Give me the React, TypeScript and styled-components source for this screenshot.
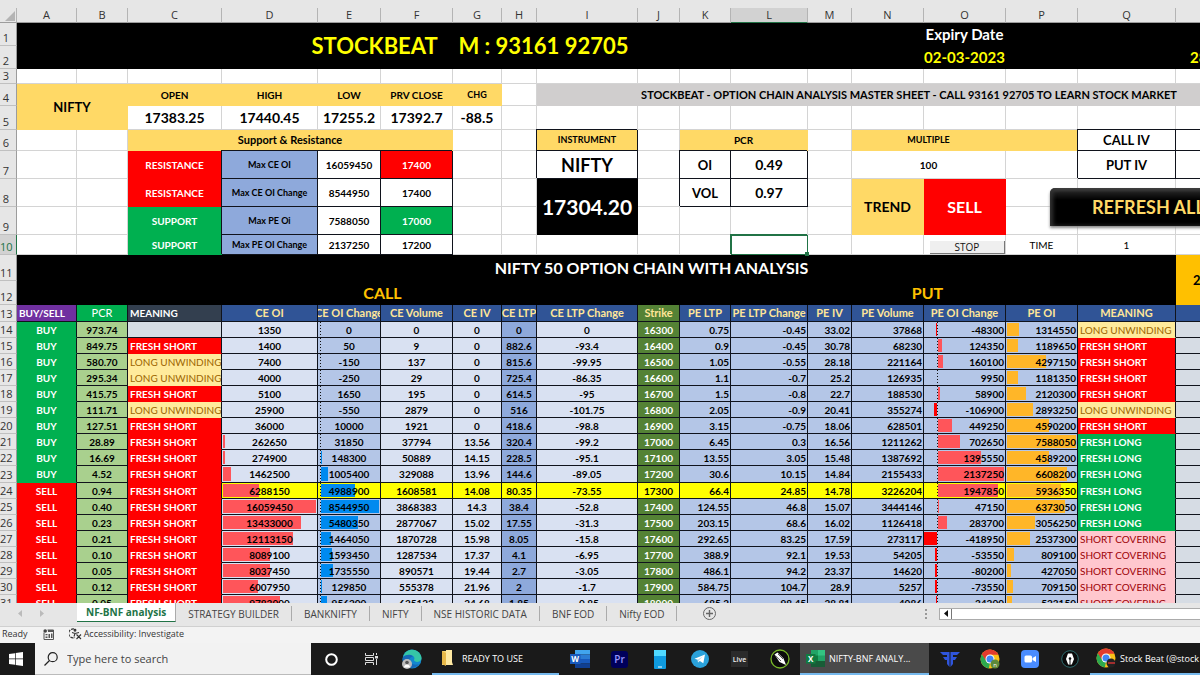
import React from "react";
import styled, { createGlobalStyle, css } from "styled-components";

const GlobalStyle = createGlobalStyle`
  *, *::before, *::after { box-sizing: border-box; }
  body { margin: 0; background: #e6e6e6; }
  button, input { font: inherit; color: inherit; border: 0; padding: 0; background: none; }
`;

const sheetFont = `Lato, "Open Sans", sans-serif`;
const uiFont = `"Open Sans", "Noto Sans", sans-serif`;
const ink = "#10131c";
const gridLine = "#d4d4d4";

/* ---------- page ---------- */

const Page = styled.div`
  display: flex;
  flex-direction: column;
  height: 100vh;
  overflow: hidden;
  font-family: ${uiFont};
  background: #e6e6e6;
`;

const SheetArea = styled.main`
  position: relative;
  flex: 1;
  min-height: 0;
  overflow: hidden;
  padding-top: 8px;
  background: #e6e6e6;
`;

const Sheet = styled.table`
  table-layout: fixed;
  width: 100%;
  min-width: 1282px;
  border-collapse: separate;
  border-spacing: 0;
  background: #fff;
  font-family: ${sheetFont};
  line-height: 14px;
  color: #000;
`;

const Col = styled.col<{ $w?: number }>`
  width: ${(p) => (p.$w ? `${p.$w}px` : "auto")};
`;

const Row = styled.tr<{ $h: number }>`
  height: ${(p) => p.$h}px;
`;

const ColumnHead = styled.th<{ $active?: boolean }>`
  height: 15px;
  padding: 0;
  font: 400 11px/14px ${uiFont};
  color: #333;
  background: ${(p) => (p.$active ? "#d2d2d2" : "#e6e6e6")};
  border-right: 1px solid #b4b4b4;
  border-bottom: 1px solid ${(p) => (p.$active ? "#217346" : "#9c9c9c")};
`;

const Corner = styled(ColumnHead)`
  vertical-align: bottom;
  svg { display: block; margin: 0 1px 1px auto; }
`;

const RowHead = styled.th<{ $active?: boolean }>`
  padding: 0 4px 0 0;
  vertical-align: bottom;
  text-align: center;
  font: 400 11px/14px ${uiFont};
  color: ${(p) => (p.$active ? "#217346" : "#333")};
  background: ${(p) => (p.$active ? "#d2d2d2" : "#e6e6e6")};
  border-right: 1px solid ${(p) => (p.$active ? "#217346" : "#9c9c9c")};
  border-bottom: 1px solid #c0c0c0;
`;

/* ---------- cells ---------- */

const boxed = css`
  border-right: 1px solid ${ink};
  border-bottom: 1px solid ${ink};
  box-shadow: -1px -1px 0 0 ${ink};
`;

const Cell = styled.td<{ $size?: number }>`
  padding: 0;
  text-align: center;
  white-space: nowrap;
  overflow: hidden;
  font-size: ${(p) => p.$size ?? 10}px;
  line-height: ${(p) => ((p.$size ?? 10) > 11 ? 20 : 14)}px;
  border-right: 1px solid ${gridLine};
  border-bottom: 1px solid ${gridLine};
`;

const BlackCell = styled(Cell)<{ $fg?: string }>`
  background: #000;
  color: ${(p) => p.$fg ?? "#fff"};
  font-weight: 700;
  border-color: #000;
`;

const ClippedDate = styled(BlackCell)`
  text-align: left;
  padding-left: 14px;
`;

const AmberCell = styled(Cell)<{ $boxed?: boolean }>`
  background: #ffd966;
  font-weight: 700;
  border-color: #ffd966;
  ${(p) => p.$boxed && boxed}
`;

const GoldCell = styled(Cell)`
  background: #ffc000;
  border-color: #ffc000;
  font-weight: 700;
  text-align: left;
  padding-left: 17px;
`;

const BannerCell = styled(Cell)`
  background: #d0cece;
  border-color: #d0cece;
  font-weight: 700;
`;

const ValueCell = styled(Cell)`
  font-weight: 700;
`;

const BoxCell = styled(Cell)<{ $bg?: string; $fg?: string }>`
  ${boxed}
  font-weight: 700;
  background: ${(p) => p.$bg ?? "#fff"};
  color: ${(p) => p.$fg ?? "#000"};
`;

const LevelCell = styled(Cell)<{ $support?: boolean }>`
  background: ${(p) => (p.$support ? "#00b050" : "#f00")};
  border-color: ${(p) => (p.$support ? "#00b050" : "#f00")};
  color: #fff;
  font-weight: 700;
`;

const SelectedCell = styled(Cell)`
  position: relative;
  overflow: visible;
  border: 0;
  box-shadow: inset 0 0 0 1px #217346, -1px -1px 0 0 #217346;
  &::after {
    content: "";
    position: absolute;
    right: -1px;
    bottom: -1px;
    width: 4px;
    height: 4px;
    background: #217346;
  }
`;

const StopSlot = styled(Cell)`
  padding: 6px 0 0 6px;
  vertical-align: top;
`;

const StopButton = styled.button`
  display: block;
  width: 100%;
  height: 13px;
  overflow: hidden;
  background: #efefef;
  border-right: 1px solid #777;
  border-bottom: 1px solid #777;
  font: 400 10px/13px ${uiFont};
  color: #111;
`;

const RefreshButton = styled.button`
  position: absolute;
  left: 1050px;
  top: 188px;
  width: 190px;
  height: 38px;
  padding-left: 42px;
  text-align: left;
  white-space: nowrap;
  border-radius: 5px 5px 0 0;
  background: linear-gradient(#4a4a4a 0, #1c1c1c 5px, #000 12px);
  box-shadow: 0 2px 3px #888, inset 3px 0 4px #333;
  font: 700 18px/38px ${sheetFont};
  color: #ffd966;
`;

/* ---------- option chain ---------- */

const ChainHead = styled.th<{ $bg?: string; $fg?: string; $left?: boolean; $thin?: boolean }>`
  padding: 0 0 0 ${(p) => (p.$left ? 2 : 0)}px;
  overflow: hidden;
  white-space: nowrap;
  text-align: ${(p) => (p.$left ? "left" : "center")};
  font-size: ${(p) => (p.$left ? 10 : 11)}px;
  line-height: 14px;
  font-weight: ${(p) => (p.$thin ? 400 : 700)};
  background: ${(p) => p.$bg ?? "#305496"};
  color: ${(p) => p.$fg ?? "#ffe699"};
  border-right: 1px solid ${ink};
  border-bottom: 1px solid ${ink};
`;

/* Wider than its cell, so that a long heading is clipped evenly at both sides. */
const HeadText = styled.span`
  display: block;
  margin: 0 -4px;
`;

const SignalCell = styled(Cell)<{ $sell: boolean }>`
  background: ${(p) => (p.$sell ? "#f00" : "#00b050")};
  color: #fff;
  font-weight: 700;
  border-color: ${(p) => (p.$sell ? "#f00" : "#00b050")};
  border-right-color: ${ink};
`;

type Tone = "ratio" | "light" | "mid" | "strong" | "strike" | "side";
const toneColor: Record<Tone, string> = {
  ratio: "#a9d08e",
  light: "#d9e1f2",
  mid: "#b4c6e7",
  strong: "#8ea9db",
  strike: "#548235",
  side: "#d6dce4",
};

const ChainCell = styled(Cell)<{ $tone: Tone; $atm?: boolean; $right?: boolean }>`
  background-color: ${(p) => (p.$atm ? "#ff0" : toneColor[p.$tone])};
  color: ${(p) => (p.$tone === "strike" && !p.$atm ? "#fff" : "#000")};
  font-weight: 700;
  text-align: ${(p) => (p.$right ? "right" : "center")};
  padding-right: ${(p) => (p.$right ? 1 : 0)}px;
  border-color: ${ink};
`;

/* A solid data bar; --from and --len are computed from the cell's value. */
const BarCell = styled(ChainCell)<{ $bar: string }>`
  background-image: linear-gradient(${(p) => p.$bar}, ${(p) => p.$bar});
  background-repeat: no-repeat;
  background-position: var(--from) 1px;
  background-size: var(--len) calc(100% - 2px);
`;

/* A data bar that grows from a dashed zero axis. */
const AxisBarCell = styled(ChainCell)<{ $bar: string; $axis: number }>`
  background-image: linear-gradient(#111 50%, transparent 50%),
    linear-gradient(${(p) => p.$bar}, ${(p) => p.$bar});
  background-repeat: repeat-y, no-repeat;
  background-position: ${(p) => p.$axis}px 0, var(--from) 1px;
  background-size: 1px 3px, var(--len) calc(100% - 2px);
`;

type Mood = "FRESH SHORT" | "LONG UNWINDING" | "FRESH LONG" | "SHORT COVERING" | "";
const moodStyle: Record<Mood, ReturnType<typeof css>> = {
  "FRESH SHORT": css`background: #f00; border-color: #f00; color: #fff; font-weight: 700;`,
  "LONG UNWINDING": css`background: #ffeb9c; border-color: #ffeb9c; color: #9c6500;`,
  "FRESH LONG": css`background: #00b050; border-color: #00b050; color: #fff; font-weight: 700;`,
  "SHORT COVERING": css`background: #ffc7ce; border-color: #ffc7ce; color: #9c0006;`,
  "": css`background: #d6dce4; border-color: ${ink};`,
};

const MoodCell = styled(Cell)<{ $mood: Mood }>`
  text-align: left;
  padding-left: 2px;
  ${(p) => moodStyle[p.$mood]}
  border-right-color: ${ink};
`;

/* ---------- data ---------- */

const letters = "ABCDEFGHIJKLMNOPQR".split("");
const widths = [60, 51, 94, 96, 63, 72, 49, 35, 101, 42, 51, 77, 44, 72, 82, 72, 98];

type ChainRow = [string, Mood, number, number, string, string, string, string, string, string, string, string, string, number, number, Mood];
const FS: Mood = "FRESH SHORT";
const LU: Mood = "LONG UNWINDING";
const FL: Mood = "FRESH LONG";
const SC: Mood = "SHORT COVERING";

const chain: ChainRow[] = [
  ["973.74", "", 1350, 0, "0", "0", "0", "0", "16300", "0.75", "-0.45", "33.02", "37868", -48300, 1314550, LU],
  ["849.75", FS, 1400, 50, "9", "0", "882.6", "-93.4", "16400", "0.9", "-0.45", "30.78", "68230", 124350, 1189650, FS],
  ["580.70", LU, 7400, -150, "137", "0", "815.6", "-99.95", "16500", "1.05", "-0.55", "28.18", "221164", 160100, 4297150, FS],
  ["295.34", LU, 4000, -250, "29", "0", "725.4", "-86.35", "16600", "1.1", "-0.7", "25.2", "126935", 9950, 1181350, FS],
  ["415.75", FS, 5100, 1650, "195", "0", "614.5", "-95", "16700", "1.5", "-0.8", "22.7", "188530", 58900, 2120300, FS],
  ["111.71", LU, 25900, -550, "2879", "0", "516", "-101.75", "16800", "2.05", "-0.9", "20.41", "355274", -106900, 2893250, LU],
  ["127.51", FS, 36000, 10000, "1921", "0", "418.6", "-98.8", "16900", "3.15", "-0.75", "18.06", "628501", 449250, 4590200, FS],
  ["28.89", FS, 262650, 31850, "37794", "13.56", "320.4", "-99.2", "17000", "6.45", "0.3", "16.56", "1211262", 702650, 7588050, FL],
  ["16.69", FS, 274900, 148300, "50889", "14.15", "228.5", "-95.1", "17100", "13.55", "3.05", "15.48", "1387692", 1395550, 4589200, FL],
  ["4.52", FS, 1462500, 1005400, "329088", "13.96", "144.6", "-89.05", "17200", "30.6", "10.15", "14.84", "2155433", 2137250, 6608200, FL],
  ["0.94", FS, 6288150, 4988900, "1608581", "14.08", "80.35", "-73.55", "17300", "66.4", "24.85", "14.78", "3226204", 1947850, 5936350, FL],
  ["0.40", FS, 16059450, 8544950, "3868383", "14.3", "38.4", "-52.8", "17400", "124.55", "46.8", "15.07", "3444146", 47150, 6373050, FL],
  ["0.23", FS, 13433000, 5480350, "2877067", "15.02", "17.55", "-31.3", "17500", "203.15", "68.6", "16.02", "1126418", 283700, 3056250, FL],
  ["0.21", FS, 12113150, 1464050, "1870728", "15.98", "8.05", "-15.8", "17600", "292.65", "83.25", "17.59", "273117", -418950, 2537300, SC],
  ["0.10", FS, 8089100, 1593450, "1287534", "17.37", "4.1", "-6.95", "17700", "388.9", "92.1", "19.53", "54205", -53550, 809100, SC],
  ["0.05", FS, 8037450, 1735550, "890571", "19.44", "2.7", "-3.05", "17800", "486.1", "94.2", "23.37", "14620", -80200, 427050, SC],
  ["0.12", FS, 6007950, 129850, "555378", "21.96", "2", "-1.7", "17900", "584.75", "104.7", "28.9", "5257", -73550, 709150, SC],
  ["0.05", FS, 9783000, 956200, "625123", "24.68", "1.85", "-0.85", "18000", "685.2", "98.45", "28.81", "4086", -34200, 523150, SC],
];

const barVars = (value: number, max: number, full: number, start: number) => {
  const len = Math.round((Math.abs(value) / max) * full);
  const from = value < 0 ? start - 1 - len : start;
  return { "--from": `${from}px`, "--len": `${len}px` } as React.CSSProperties;
};

const Blanks = ({ n }: { n: number }) => (
  <>
    {Array.from({ length: n }, (_, i) => (
      <Cell key={i} />
    ))}
  </>
);

const Num = ({ n, active }: { n: number; active?: boolean }) => (
  <RowHead scope="row" $active={active}>
    {n}
  </RowHead>
);

const chainHeads = ["CE OI", "CE OI Change", "CE Volume", "CE IV", "CE LTP", "CE LTP Change"];
const putHeads = ["PE LTP", "PE LTP Change", "PE IV", "PE Volume", "PE OI Change", "PE OI", "MEANING", ""];

const ChainRows = () => (
  <>
    {chain.map((r, i) => {
      const atm = r[8] === "17300";
      return (
        <Row key={r[8]} $h={i === 9 ? 17 : 16}>
          <Num n={14 + i} />
          <SignalCell $sell={i > 9}>{i > 9 ? "SELL" : "BUY"}</SignalCell>
          <ChainCell $tone="ratio">{r[0]}</ChainCell>
          <MoodCell $mood={r[1]}>{r[1]}</MoodCell>
          <BarCell $tone="light" $atm={atm} $bar="#ff555a" style={barVars(r[2], 16059450, 93, 1)}>{r[2]}</BarCell>
          <AxisBarCell $tone="mid" $atm={atm} $bar="#008aef" $axis={2} style={barVars(r[3], 8544950, 58, 3)}>{r[3]}</AxisBarCell>
          <ChainCell $tone="light" $atm={atm}>{r[4]}</ChainCell>
          <ChainCell $tone="light" $atm={atm}>{r[5]}</ChainCell>
          <ChainCell $tone="strong" $atm={atm}>{r[6]}</ChainCell>
          <ChainCell $tone="light" $atm={atm}>{r[7]}</ChainCell>
          <ChainCell $tone="strike" $atm={atm}>{r[8]}</ChainCell>
          <ChainCell $tone="mid" $atm={atm} $right>{r[9]}</ChainCell>
          <ChainCell $tone="mid" $atm={atm} $right>{r[10]}</ChainCell>
          <ChainCell $tone="mid" $atm={atm} $right>{r[11]}</ChainCell>
          <ChainCell $tone="mid" $atm={atm} $right>{r[12]}</ChainCell>
          <AxisBarCell $tone="mid" $atm={atm} $right $bar={r[13] < 0 ? "#f00" : "#ff555a"} $axis={13} style={barVars(r[13], 2137250, 66, 14)}>{r[13]}</AxisBarCell>
          <BarCell $tone="mid" $atm={atm} $right $bar="#ffb628" style={barVars(r[14], 7588050, 69, 1)}>{r[14]}</BarCell>
          <MoodCell $mood={r[15]}>{r[15]}</MoodCell>
          <ChainCell $tone="side" />
        </Row>
      );
    })}
  </>
);

/* ---------- bottom bars ---------- */

const TabBar = styled.nav`
  display: flex;
  align-items: center;
  height: 23px;
  flex: none;
  padding-bottom: 2px;
  background: #e6e6e6;
  font-size: 10px;
  color: #444;
`;

const TabArrows = styled.div`
  display: flex;
  justify-content: space-between;
  width: 77px;
  padding: 0 33px 0 18px;
  svg { display: block; }
`;

const Tab = styled.button<{ $active?: boolean }>`
  flex: none;
  height: 15px;
  padding: 0 12px;
  line-height: 14px;
  border-right: 1px solid #ababab;
  ${(p) =>
    p.$active &&
    css`
      align-self: flex-start;
      height: 19px;
      padding: 0 9px;
      line-height: 18px;
      font-weight: 700;
      color: #217346;
      background: #fff;
      border-bottom: 1px solid #217346;
    `}
`;

const AddSheet = styled.button`
  display: flex;
  margin-left: 26px;
`;

const ScrollGroup = styled.div`
  display: flex;
  align-items: center;
  gap: 12px;
  width: 275px;
  margin-left: auto;
`;

const ScrollTrack = styled.div`
  display: flex;
  flex: 1;
  height: 12px;
  border: 1px solid #ababab;
  border-right: 0;
  background: #fff;
`;

const ScrollArrow = styled.button`
  display: flex;
  align-items: center;
  justify-content: center;
  width: 12px;
  border-right: 1px solid #777;
`;

const StatusBar = styled.footer`
  display: flex;
  align-items: center;
  flex: none;
  gap: 15px;
  height: 17px;
  padding: 0 0 2px 2px;
  border-top: 1px solid #d0d0d0;
  background: #f3f3f3;
  font-size: 9px;
  line-height: 14px;
  color: #333;
  svg { display: block; }
`;

const StatusItem = styled.span`
  display: flex;
  align-items: center;
  gap: 2px;
`;

const TaskBar = styled.div`
  display: flex;
  flex: none;
  gap: 1px;
  height: 32px;
  overflow: hidden;
  background: #1a1a1a;
  font-size: 9px;
  color: #fff;
`;

const StartGroup = styled.div`
  display: flex;
  flex: none;
  width: 311px;
`;

const StartButton = styled.button`
  display: flex;
  align-items: center;
  justify-content: center;
  width: 35px;
  padding-right: 4px;
`;

const SearchBox = styled.label`
  display: flex;
  flex: 1;
  align-items: center;
  gap: 9px;
  padding-left: 9px;
  background: #f2f2f2;
  border-bottom: 1px solid #bbb;
`;

const SearchInput = styled.input`
  flex: 1;
  min-width: 0;
  outline: 0;
  font-size: 11px;
  line-height: 16px;
  color: #333;
  &::placeholder { color: #444; opacity: 1; }
`;

const TaskIcon = styled.button`
  display: flex;
  flex: none;
  align-items: center;
  justify-content: center;
  width: 39px;
`;

const TaskWindow = styled.button<{ $w: number; $active?: boolean }>`
  display: flex;
  flex: none;
  align-items: center;
  gap: 4px;
  width: ${(p) => p.$w}px;
  padding-left: 6px;
  white-space: nowrap;
  background: ${(p) => (p.$active ? "#4a4a4a" : "transparent")};
  border-bottom: 2px solid #76b9ed;
`;

const Chrome = () => (
  <>
    <circle cx="10" cy="10" r="9.5" fill="#fbc116" />
    <path d="M10 10 5.5 12.5 1.8 5.3A9.500 9.500 0 0 1 18.500 5.800H10Z" fill="#e33b2e" />
    <path d="M1.800 5.300 6.300 12.200 10 14 8.800 19.400A9.500 9.500 0 0 1 1.800 5.300Z" fill="#2da94f" />
    <circle cx="10" cy="10" r="4.500" fill="#fff" />
    <circle cx="10" cy="10" r="3.500" fill="#4285f4" />
  </>
);

const App = () => (
  <Page>
    <GlobalStyle />
    <SheetArea>
      <Sheet>
        <colgroup>
          <Col $w={17} />
          {widths.map((w, i) => (
            <Col key={i} $w={w} />
          ))}
          <Col />
        </colgroup>
        <thead>
          <tr>
            <Corner aria-label="Select all">
              <svg width="10" height="10"><path d="M10 0V10H0Z" fill="#b4b4b4" /></svg>
            </Corner>
            {letters.map((l) => (
              <ColumnHead key={l} scope="col" $active={l === "L"}>{l}</ColumnHead>
            ))}
          </tr>
        </thead>
        <tbody>
          <Row $h={23}>
            <Num n={1} />
            <BlackCell colSpan={14} rowSpan={2} $size={22} $fg="#ff0">STOCKBEAT &nbsp; &nbsp;M : 93161 92705</BlackCell>
            <BlackCell $size={15}>Expiry Date</BlackCell>
            <BlackCell colSpan={3} />
          </Row>
          <Row $h={23}>
            <Num n={2} />
            <BlackCell $size={15} $fg="#ff0">02-03-2023</BlackCell>
            <BlackCell colSpan={2} />
            <ClippedDate $size={15} $fg="#ff0">28</ClippedDate>
          </Row>
          <Row $h={15}>
            <Num n={3} />
            <Blanks n={18} />
          </Row>
          <Row $h={22}>
            <Num n={4} />
            <AmberCell colSpan={2} rowSpan={2} $size={13}>NIFTY</AmberCell>
            <AmberCell>OPEN</AmberCell>
            <AmberCell>HIGH</AmberCell>
            <AmberCell>LOW</AmberCell>
            <AmberCell>PRV CLOSE</AmberCell>
            <AmberCell $size={9}>CHG</AmberCell>
            <Blanks n={1} />
            <BannerCell colSpan={10} $size={11}>STOCKBEAT - OPTION CHAIN ANALYSIS MASTER SHEET - CALL 93161 92705 TO LEARN STOCK MARKET</BannerCell>
          </Row>
          <Row $h={24}>
            <Num n={5} />
            <ValueCell $size={14}>17383.25</ValueCell>
            <ValueCell $size={14}>17440.45</ValueCell>
            <ValueCell $size={14}>17255.2</ValueCell>
            <ValueCell $size={14}>17392.7</ValueCell>
            <ValueCell $size={14}>-88.5</ValueCell>
            <Blanks n={11} />
          </Row>
          <Row $h={21}>
            <Num n={6} />
            <Blanks n={2} />
            <AmberCell colSpan={4} $size={11}>Support &amp; Resistance</AmberCell>
            <Blanks n={2} />
            <AmberCell $boxed $size={9}>INSTRUMENT</AmberCell>
            <Blanks n={1} />
            <AmberCell colSpan={2}>PCR</AmberCell>
            <Blanks n={1} />
            <AmberCell colSpan={2} $size={9}>MULTIPLE</AmberCell>
            <AmberCell />
            <BoxCell $size={13}>CALL IV</BoxCell>
            <BoxCell />
          </Row>
          <Row $h={28}>
            <Num n={7} />
            <Blanks n={2} />
            <LevelCell>RESISTANCE</LevelCell>
            <BoxCell $bg="#8ea9db" $size={9}>Max CE OI</BoxCell>
            <BoxCell>16059450</BoxCell>
            <BoxCell $bg="#f00" $fg="#fff">17400</BoxCell>
            <Blanks n={2} />
            <BoxCell $size={18}>NIFTY</BoxCell>
            <Blanks n={1} />
            <BoxCell $size={13}>OI</BoxCell>
            <BoxCell $size={14}>0.49</BoxCell>
            <Blanks n={1} />
            <ValueCell colSpan={2}>100</ValueCell>
            <Blanks n={1} />
            <BoxCell $size={13}>PUT IV</BoxCell>
            <BoxCell />
          </Row>
          <Row $h={28}>
            <Num n={8} />
            <Blanks n={2} />
            <LevelCell>RESISTANCE</LevelCell>
            <BoxCell $bg="#8ea9db" $size={9}>Max CE OI Change</BoxCell>
            <BoxCell>8544950</BoxCell>
            <BoxCell>17400</BoxCell>
            <Blanks n={2} />
            <BlackCell rowSpan={2} $size={21}>17304.20</BlackCell>
            <Blanks n={1} />
            <BoxCell $size={13}>VOL</BoxCell>
            <BoxCell $size={14}>0.97</BoxCell>
            <Blanks n={1} />
            <AmberCell rowSpan={2} $size={14}>TREND</AmberCell>
            <LevelCell rowSpan={2} $size={16}>SELL</LevelCell>
            <Blanks n={3} />
          </Row>
          <Row $h={28}>
            <Num n={9} />
            <Blanks n={2} />
            <LevelCell $support>SUPPORT</LevelCell>
            <BoxCell $bg="#8ea9db" $size={9}>Max PE Oi</BoxCell>
            <BoxCell>7588050</BoxCell>
            <BoxCell $bg="#00b050" $fg="#fff">17000</BoxCell>
            <Blanks n={2} />
            <Blanks n={4} />
            <Blanks n={3} />
          </Row>
          <Row $h={20}>
            <Num n={10} active />
            <Blanks n={2} />
            <LevelCell $support>SUPPORT</LevelCell>
            <BoxCell $bg="#8ea9db" $size={9}>Max PE OI Change</BoxCell>
            <BoxCell>2137250</BoxCell>
            <BoxCell>17200</BoxCell>
            <Blanks n={5} />
            <SelectedCell />
            <Blanks n={2} />
            <StopSlot><StopButton>STOP</StopButton></StopSlot>
            <Cell>TIME</Cell>
            <Cell>1</Cell>
            <Blanks n={1} />
          </Row>
          <Row $h={26}>
            <Num n={11} />
            <BlackCell colSpan={2} />
            <BlackCell colSpan={15} $size={16}>NIFTY 50 OPTION CHAIN WITH ANALYSIS</BlackCell>
            <GoldCell rowSpan={2} $size={13}>2</GoldCell>
          </Row>
          <Row $h={24}>
            <Num n={12} />
            <BlackCell colSpan={2} />
            <BlackCell colSpan={7} $size={16} $fg="#ffc000">CALL</BlackCell>
            <BlackCell />
            <BlackCell colSpan={7} $size={16} $fg="#ffc000">PUT</BlackCell>
          </Row>
          <Row $h={17}>
            <Num n={13} />
            <ChainHead scope="col" $bg="#7030a0" $fg="#fff" $left>BUY/SELL</ChainHead>
            <ChainHead scope="col" $bg="#00b050" $fg="#fff" $thin>PCR</ChainHead>
            <ChainHead scope="col" $bg="#333f4f" $fg="#fff" $left>MEANING</ChainHead>
            {chainHeads.map((h) => <ChainHead key={h} scope="col"><HeadText>{h}</HeadText></ChainHead>)}
            <ChainHead scope="col" $bg="#548235">Strike</ChainHead>
            {putHeads.map((h) => <ChainHead key={h} scope="col"><HeadText>{h}</HeadText></ChainHead>)}
          </Row>
          <ChainRows />
        </tbody>
      </Sheet>
      <RefreshButton>REFRESH ALL</RefreshButton>
    </SheetArea>

    <TabBar aria-label="Sheets">
      <TabArrows>
        <svg width="4" height="7"><path d="M4 0V7L0 3.500Z" fill="#bbb" /></svg>
        <svg width="4" height="7"><path d="M0 0V7L4 3.500Z" fill="#bbb" /></svg>
      </TabArrows>
      <Tab $active>NF-BNF analysis</Tab>
      <Tab>STRATEGY BUILDER</Tab>
      <Tab>BANKNIFTY</Tab>
      <Tab>NIFTY</Tab>
      <Tab>NSE HISTORIC DATA</Tab>
      <Tab>BNF EOD</Tab>
      <Tab>Nifty EOD</Tab>
      <AddSheet aria-label="New sheet">
        <svg width="13" height="13" fill="none" stroke="#666"><circle cx="6.500" cy="6.500" r="6" /><path d="M6.500 3v7M3 6.500h7" strokeWidth="1.400" /></svg>
      </AddSheet>
      <ScrollGroup>
        <svg width="2" height="10" fill="#999"><path d="M0 0h2v2H0zM0 4h2v2H0zM0 8h2v2H0z" /></svg>
        <ScrollTrack>
          <ScrollArrow aria-label="Scroll left">
            <svg width="4" height="7"><path d="M4 0V7L0 3.500Z" fill="#111" /></svg>
          </ScrollArrow>
        </ScrollTrack>
      </ScrollGroup>
    </TabBar>

    <StatusBar>
      <span>Ready</span>
      <svg width="11" height="11" viewBox="0 0 11 11"><path d="M1 3.500V10.500H10.500V1H4.500" fill="none" stroke="#555" /><circle cx="2.200" cy="2" r="1.800" fill="#444" /><path d="M5 1h5.500v2H5zM2.500 5h2v1.200h-2zM5.500 5h1.500v4H5.500zM8 4.500h1.500V9H8zM2.500 7.500h2V9h-2z" fill="#555" /></svg>
      <StatusItem>
        <svg width="13" height="12" viewBox="0 0 13 12" fill="none" stroke="#333" strokeWidth="1.100"><path d="M5 1A4.500 4.500 0 1 0 6 9.500" strokeDasharray="3 1" /><circle cx="6" cy="2.300" r=".9" fill="#333" /><path d="M3 4.500 6 5.500 10 4.500M6 5.500 5 8.500M7.500 6.500 12 11M12 6.500 7.500 11" /></svg>
        Accessibility: Investigate
      </StatusItem>
    </StatusBar>

    <TaskBar>
      <StartGroup>
        <StartButton aria-label="Start">
          <svg width="14" height="14" fill="#fff"><path d="M0 2 6 1.200V6.600H0zM6.700 1.100 14 0V6.600H6.700zM0 7.300H6V12.800L0 12zM6.700 7.300H14V14L6.700 12.900z" /></svg>
        </StartButton>
        <SearchBox>
          <svg width="14" height="14" fill="none" stroke="#222" strokeWidth="1.200"><circle cx="8.700" cy="5.200" r="4.500" /><path d="M5.500 8.500.5 13.500" /></svg>
          <SearchInput aria-label="Search" placeholder="Type here to search" />
        </SearchBox>
      </StartGroup>
      <TaskIcon aria-label="Cortana">
        <svg width="13" height="13" fill="none" stroke="#fff" strokeWidth="2"><circle cx="6.500" cy="6.500" r="5.300" /></svg>
      </TaskIcon>
      <TaskIcon aria-label="Task view">
        <svg width="14" height="12" fill="none" stroke="#ddd"><path d="M.5 0V2.500H8.500V0M.5 12V9.500H8.500V12M.5 4.500h8v3h-8zM11.500 0V2M11.500 6V12" /><path d="M10 3h3v2.500h-3z" fill="#ddd" stroke="none" /></svg>
      </TaskIcon>
      <TaskIcon aria-label="Edge">
        <svg width="20" height="20" viewBox="0 0 20 20"><circle cx="10" cy="10" r="9.500" fill="#1387cf" /><path d="M1 8C3 1 10-1 15 2c4 2.500 5.500 7 4 9-2 3-7 2-7 0 1.500-3-1-5-4-5-3 0-5.500 1-7 2Z" fill="#35c6a6" /><path d="M1 8c3-3 8-3 10-.5C7 8 6.500 12 9 14c2 2 6 2 8 1-3 4-9 5.500-13 2.500C1 15 0 11 1 8Z" fill="#1668b8" /><circle cx="5" cy="15" r="5" fill="#bbb" /><circle cx="5" cy="13.500" r="1.800" fill="#555" /><path d="M2 18.500c0-4 6-4 6 0Z" fill="#fff" /></svg>
      </TaskIcon>
      <TaskWindow $w={127}>
        <svg width="20" height="16" viewBox="0 0 20 16"><path d="M4 1h8v14H4z" fill="#f7d774" /><path d="M8 0h6v12l1 3H8z" fill="#ffe9a2" /><path d="M4 1 8 3V16L4 14z" fill="#e9b949" /></svg>
        READY TO USE
      </TaskWindow>
      <TaskIcon aria-label="Word">
        <svg width="20" height="18" viewBox="0 0 20 18"><path d="M5 0h15v4.500H5z" fill="#41a5ee" /><path d="M5 4.500h15V9H5z" fill="#2b7cd3" /><path d="M5 9h15v4.500H5z" fill="#185abd" /><path d="M5 13.500h15V18H5z" fill="#103f91" /><path d="M0 4h10.500v10H0z" fill="#185abd" /><text x="5.200" y="12" fontSize="8" fontWeight="700" textAnchor="middle" fill="#fff">W</text></svg>
      </TaskIcon>
      <TaskIcon aria-label="Premiere">
        <svg width="17" height="17"><rect width="17" height="17" rx="3" fill="#00005b" /><text x="8.500" y="12" fontSize="10" fontWeight="600" textAnchor="middle" fill="#9999ff">Pr</text></svg>
      </TaskIcon>
      <TaskIcon aria-label="Your phone">
        <svg width="12" height="19"><rect width="12" height="19" rx="1" fill="#0f9be0" /><path d="M0 0h12v6H0z" fill="#50d9ff" /><path d="M4 17h4" stroke="#fff" /></svg>
      </TaskIcon>
      <TaskIcon aria-label="Telegram">
        <svg width="18" height="18" viewBox="0 0 18 18"><circle cx="9" cy="9" r="9" fill="#2aa1da" /><path d="M3.500 8.800 14 4.500 12.300 13.300 8.800 10.900 7 12.500 6.700 9.800Z" fill="#fff" /><path d="M6.700 9.800 12 6.300 8 10.300 7 12.500Z" fill="#b5d8ea" /></svg>
      </TaskIcon>
      <TaskIcon aria-label="Live">
        <svg width="17" height="16"><rect width="17" height="16" fill="#2b2b2b" /><text x="8.500" y="11" fontSize="7" fontWeight="600" textAnchor="middle" fill="#eee">Live</text></svg>
      </TaskIcon>
      <TaskIcon aria-label="CorelDRAW">
        <svg width="20" height="20" viewBox="0 0 20 20"><circle cx="10" cy="10" r="9" fill="#0c0c0c" stroke="#79b829" strokeWidth="1.300" /><path d="M4.500 5.500 7.500 3.500 13.500 9.500 16 16 9.500 13Z" fill="#fff" /><path d="M5.500 6.800 11 12M8 5 13 10" stroke="#111" strokeWidth=".7" /></svg>
      </TaskIcon>
      <TaskWindow $w={129} $active>
        <svg width="19" height="17" viewBox="0 0 19 17"><path d="M5 0h14v17H5z" fill="#21a366" /><path d="M12 0h7v5.500h-7z" fill="#33c481" /><path d="M5 5.500h7V11H5z" fill="#107c41" /><path d="M5 11h14v6H5z" fill="#185c37" /><path d="M0 4h9.500v9.500H0z" fill="#107c41" /><text x="4.700" y="11.500" fontSize="8" fontWeight="700" textAnchor="middle" fill="#fff">X</text></svg>
        NIFTY-BNF ANALY...
      </TaskWindow>
      <TaskIcon aria-label="FF">
        <svg width="20" height="16" viewBox="0 0 20 16" fill="#2f55dc"><path d="M0 1h8.500v3H3zM3 6h5.500v3H5zM7 1h2.500v15L7 13zM20 1h-8.500v3H17zM17 6h-5.500v3H15zM13 1h-2.500v15L13 13z" /></svg>
      </TaskIcon>
      <TaskIcon aria-label="Chrome">
        <svg width="20" height="20" viewBox="0 0 20 20"><Chrome /><circle cx="15" cy="15" r="4.500" fill="#5d8a3a" /><text x="15" y="17.500" fontSize="6" textAnchor="middle" fill="#fff">n</text></svg>
      </TaskIcon>
      <TaskIcon aria-label="Zoom">
        <svg width="18" height="18"><rect width="18" height="18" rx="4" fill="#4a8cff" /><rect x="3.500" y="5.500" width="7.500" height="7" rx="1.500" fill="#fff" /><path d="M11.500 8 15 6V12L11.500 10Z" fill="#fff" /></svg>
      </TaskIcon>
      <TaskIcon aria-label="Pen">
        <svg width="18" height="18" viewBox="0 0 18 18"><circle cx="9" cy="9" r="8.300" fill="#0b0b0b" stroke="#2e6a6c" /><path d="M7 3.500h4L13 9 10.800 14.500H7.200L5 9Z" fill="#fff" /><path d="M9 9V14.500" stroke="#111" /><circle cx="9" cy="8.500" r="1.300" fill="#111" /></svg>
      </TaskIcon>
      <TaskWindow $w={129}>
        <svg width="20" height="20" viewBox="0 0 20 20"><Chrome /><circle cx="15" cy="15" r="4.500" fill="#222" /><path d="M12 15h7" stroke="#c33" strokeWidth="1.500" /></svg>
        Stock Beat (@stock
      </TaskWindow>
    </TaskBar>
  </Page>
);

export default App;
